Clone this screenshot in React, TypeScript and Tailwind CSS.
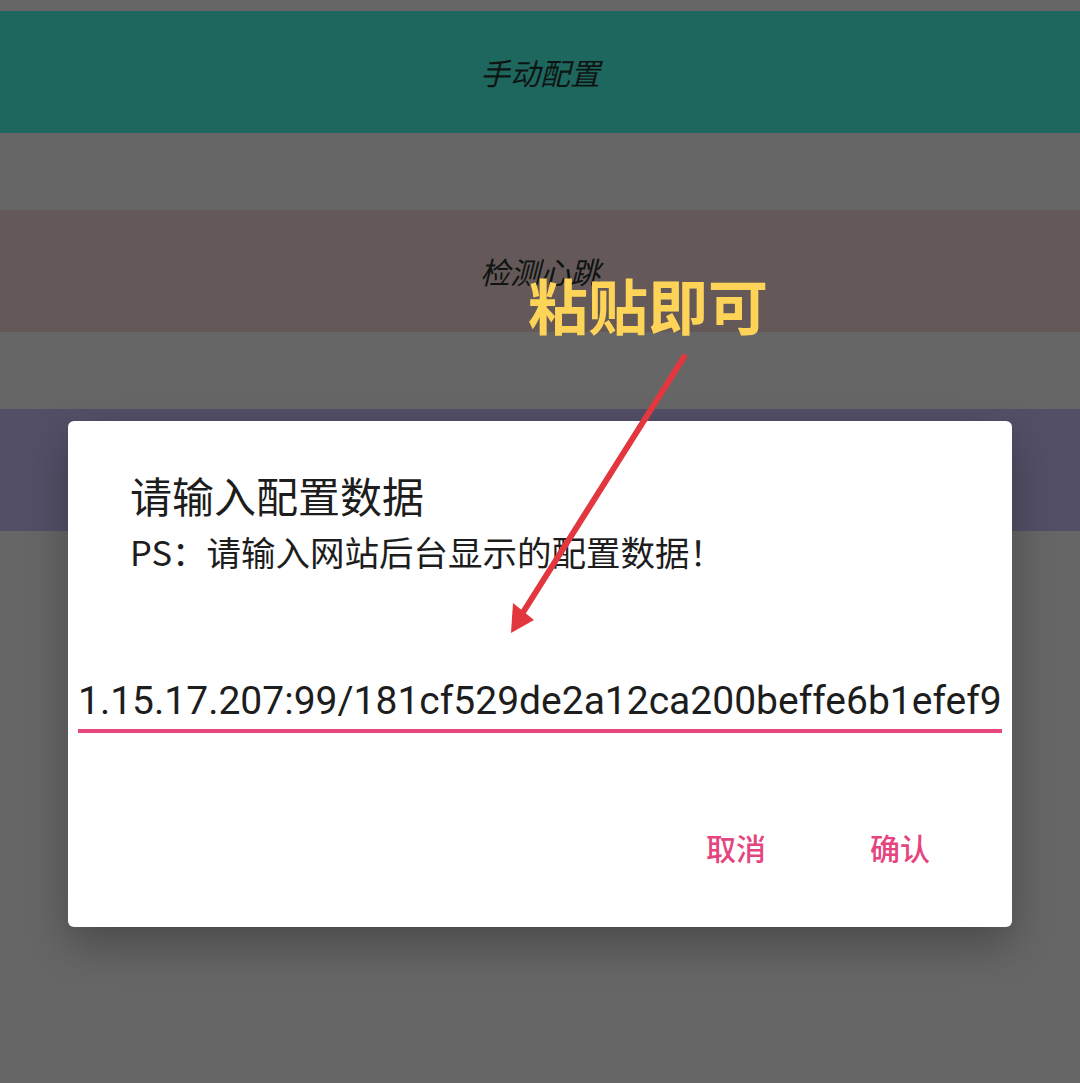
import React from 'react';

const cjk = '"Noto Sans CJK SC", "Noto Sans", sans-serif';

const bands = [
  { label: '手动配置', color: 'bg-[#1e675f]' },
  { label: '检测心跳', color: 'bg-[#645958]' },
  { label: '导入配置', color: 'bg-[#534f67]' },
];

export default function App() {
  return (
    <div
      className="relative w-full h-[1083px] overflow-hidden bg-[#666666]"
      style={{ fontFamily: cjk }}
    >
      {/* dimmed menu behind the dialog */}
      <div className="flex flex-col gap-[77px] pt-[11px]">
        {bands.map((b) => (
          <div
            key={b.label}
            className={`h-[122px] flex items-center justify-center ${b.color}`}
          >
            <span className="text-[30px] leading-none italic text-[#0e1412]">
              {b.label}
            </span>
          </div>
        ))}
      </div>

      {/* dialog */}
      <div className="absolute left-[68px] top-[421px] w-[944px] h-[506px] bg-white rounded-[6px] shadow-[0_18px_44px_rgba(0,0,0,0.28)] flex flex-col">
        <div className="pl-[62px] pt-[53px]">
          <h2 className="text-[42px] leading-[42px] font-normal text-[#1d1d1d]">
            请输入配置数据
          </h2>
          <p className="mt-[18px] text-[34.5px] leading-[35px] text-[#1d1d1d]">
            PS：请输入网站后台显示的配置数据！
          </p>
        </div>

        <div className="mt-[113px] mx-[10px]">
          <div
            className="text-[39px] leading-[39px] text-[#1d1d1d] whitespace-nowrap"
            style={{ fontFamily: 'Roboto, "Noto Sans", sans-serif' }}
          >
            1.15.17.207:99/181cf529de2a12ca200beffe6b1efef9
          </div>
          <div className="mt-[8px] h-[4px] bg-[#e8467f]" />
        </div>

        <div className="mt-[99px] flex justify-end gap-[104px] pr-[82px]">
          <button className="text-[30px] leading-[30px] font-medium text-[#e5457e]">
            取消
          </button>
          <button className="text-[30px] leading-[30px] font-medium text-[#e5457e]">
            确认
          </button>
        </div>
      </div>

      {/* annotation */}
      <div className="absolute left-[528px] top-[274px] text-[60px] leading-[60px] font-bold text-[#fdd458]">
        粘贴即可
      </div>
      <svg
        className="absolute left-0 top-0 pointer-events-none"
        width="1080"
        height="1083"
        viewBox="0 0 1080 1083"
      >
        <line
          x1="684"
          y1="357"
          x2="522"
          y2="614"
          stroke="#e2373f"
          strokeWidth="6"
          strokeLinecap="round"
        />
        <polygon points="511,633 513,603 534,620" fill="#e2373f" />
      </svg>
    </div>
  );
}
